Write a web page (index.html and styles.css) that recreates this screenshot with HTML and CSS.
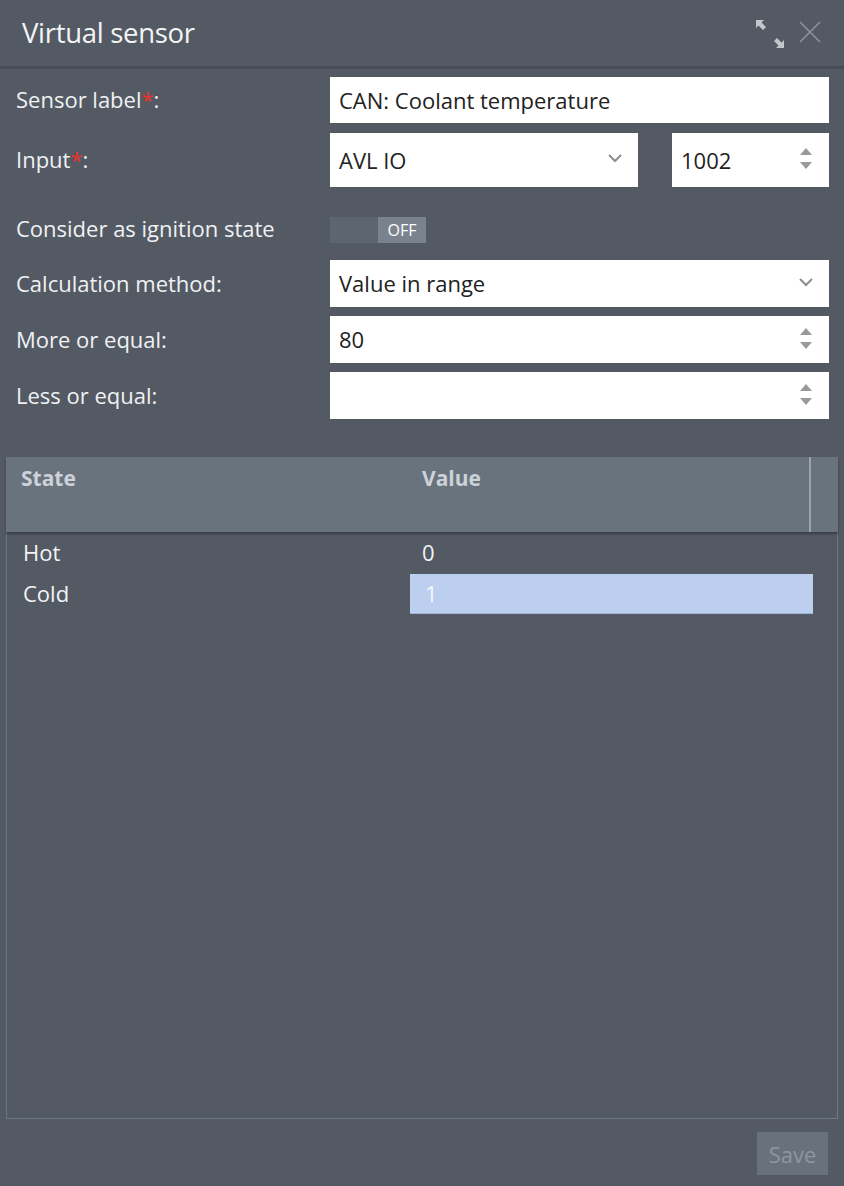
FILE: index.html
```html
<!DOCTYPE html>
<html>
<head>
<meta charset="utf-8">
<link rel="stylesheet" href="styles.css">
</head>
<body>
<div class="dialog">
  <div class="header">
    <div class="title">Virtual sensor</div>
    <div class="hicons">
      <svg class="expand" width="30" height="30" viewBox="0 0 30 30">
        <path d="M1 1 L9 1 L6.5 3.5 L11 8 L8 11 L3.5 6.5 L1 9 Z" fill="#c3c7cc"/>
        <path d="M29 29 L21 29 L23.5 26.5 L19 22 L22 19 L26.5 23.5 L29 21 Z" fill="#c3c7cc"/>
      </svg>
      <svg class="close" width="22" height="22" viewBox="0 0 22 22">
        <path d="M1 1 L21 21 M21 1 L1 21" stroke="#8c929a" stroke-width="1.6" fill="none"/>
      </svg>
    </div>
  </div>

  <div class="form">
    <div class="row r1">
      <div class="label">Sensor label<span class="req">*</span>:</div>
      <div class="field text">CAN: Coolant temperature</div>
    </div>
    <div class="row r2">
      <div class="label">Input<span class="req">*</span>:</div>
      <div class="field select w-avl">AVL IO
        <svg class="chev" width="14" height="9" viewBox="0 0 14 9"><path d="M1 1 L7 7 L13 1" stroke="#8d8d8d" stroke-width="2" fill="none"/></svg>
      </div>
      <div class="field number w-num">1002
        <span class="spin"><i class="up"></i><i class="down"></i></span>
      </div>
    </div>
    <div class="row r3">
      <div class="label">Consider as ignition state</div>
      <div class="toggle"><span class="toff"></span><span class="ton">OFF</span></div>
    </div>
    <div class="row r4">
      <div class="label">Calculation method:</div>
      <div class="field select">Value in range
        <svg class="chev" width="14" height="9" viewBox="0 0 14 9"><path d="M1 1 L7 7 L13 1" stroke="#8d8d8d" stroke-width="2" fill="none"/></svg>
      </div>
    </div>
    <div class="row r5">
      <div class="label">More or equal:</div>
      <div class="field number">80
        <span class="spin"><i class="up"></i><i class="down"></i></span>
      </div>
    </div>
    <div class="row r6">
      <div class="label">Less or equal:</div>
      <div class="field number">
        <span class="spin"><i class="up"></i><i class="down"></i></span>
      </div>
    </div>
  </div>

  <div class="table">
    <div class="thead">
      <div class="th th-state">State</div>
      <div class="th th-value">Value</div>
      <div class="th th-scroll"></div>
    </div>
    <div class="tbody">
      <div class="tr">
        <div class="td td-state">Hot</div>
        <div class="td td-value">0</div>
      </div>
      <div class="tr">
        <div class="td td-state">Cold</div>
        <div class="td td-value sel">1</div>
      </div>
    </div>
  </div>

  <div class="footer">
    <div class="save">Save</div>
  </div>
</div>
</body>
</html>
```
FILE: styles.css
```css
* { box-sizing: border-box; }
html, body {
  margin: 0;
  padding: 0;
  background: #535a64;
  font-family: "Open Sans", "Noto Sans", "Liberation Sans", sans-serif;
  color: #f2f3f5;
}
.dialog {
  width: 844px;
  height: 1186px;
  display: flex;
  flex-direction: column;
}
.header {
  height: 69px;
  border-bottom: 3px solid #484e57;
  display: flex;
  align-items: center;
  justify-content: space-between;
  padding: 0 22px 2px 22px;
}
.title {
  font-size: 27.5px;
  color: #f4f5f7;
  letter-spacing: -0.3px;
}
.hicons {
  display: flex;
  align-items: center;
  gap: 14px;
}
.expand { margin-top: 4px; }
.close { margin-right: 1px; }

.form {
  padding: 8px 15px 0 16px;
  display: flex;
  flex-direction: column;
}
.row {
  display: flex;
  align-items: center;
}
.label {
  width: 314px;
  font-size: 22px;
  color: #f0f1f3;
  padding-bottom: 2px;
}
.r3 .label { padding-bottom: 5px; }
.req { color: #f0302a; }
.r1 { height: 46px; }
.r2 { height: 54px; margin-top: 10px; }
.r3 { height: 26px; margin-top: 30px; }
.r4 { height: 47px; margin-top: 17px; }
.r5 { height: 47px; margin-top: 9px; }
.r6 { height: 47px; margin-top: 9px; }

.field {
  flex: 1;
  height: 100%;
  background: #ffffff;
  color: #222;
  font-size: 22px;
  padding: 0 9px 1px 9px;
  display: flex;
  align-items: center;
  position: relative;
}
.w-avl { flex: 0 0 308px; }
.w-num { flex: 0 0 157px; margin-left: 34px; }
.chev {
  position: absolute;
  right: 16px;
  top: 50%;
  margin-top: -6px;
}
.spin {
  position: absolute;
  right: 17px;
  top: 50%;
  margin-top: -12px;
  display: flex;
  flex-direction: column;
  gap: 7px;
}
.spin i {
  display: block;
  width: 0;
  height: 0;
  border-left: 6px solid transparent;
  border-right: 6px solid transparent;
}
.spin .up { border-bottom: 7px solid #9a9a9a; }
.spin .down { border-top: 7px solid #9a9a9a; }

.toggle {
  display: flex;
  height: 26px;
  width: 96px;
}
.toff {
  width: 48px;
  background: #5d656e;
}
.ton {
  width: 48px;
  background: #7a838d;
  color: #ffffff;
  font-size: 16px;
  display: flex;
  align-items: center;
  justify-content: center;
}

.table {
  margin: 38px 6px 0 6px;
  height: 662px;
  border: 1px solid #6d7782;
  border-top: none;
  display: flex;
  flex-direction: column;
}
.thead {
  height: 75px;
  background: #69737e;
  display: flex;
  box-shadow: 0 2px 2px rgba(40, 44, 50, 0.6);
  position: relative;
  margin: 0 -1px;
}
.th {
  font-size: 21px;
  font-weight: 700;
  color: #cdd1d8;
  padding-top: 7px;
}
.th-state { width: 416px; padding-left: 15px; }
.th-value { flex: 1; padding-left: 0; }
.th-scroll {
  width: 29px;
  border-left: 2px solid #9aa3ad;
}
.tr {
  display: flex;
  height: 41px;
  align-items: center;
  font-size: 22px;
}
.td-state { width: 403px; padding-left: 16px; color: #f2f3f5; padding-bottom: 1px; }
.td-value { width: 403px; padding-left: 12px; height: 40px; display: flex; align-items: center; color: #f2f3f5; padding-bottom: 1px; }
.td-value.sel {
  background: #bccfee;
  color: #f5f7fb;
  border-bottom: 1px solid #9fb3d6;
  padding-left: 15px;
}

.footer {
  display: flex;
  justify-content: flex-end;
  padding: 13px 16px 0 0;
}
.save {
  width: 71px;
  height: 43px;
  background: #69717b;
  color: #8f96a0;
  font-size: 22px;
  display: flex;
  align-items: center;
  justify-content: center;
}
```
